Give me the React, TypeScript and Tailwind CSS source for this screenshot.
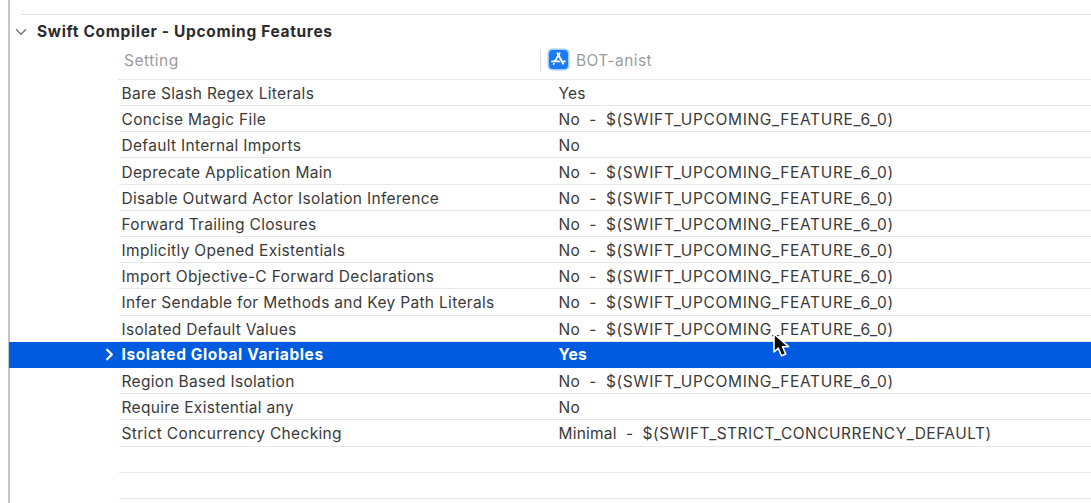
import { ChevronDown, ChevronRight } from "lucide-react";

type Setting = {
  name: string;
  value: string;
  macro?: string;
};

const UPCOMING = "$(SWIFT_UPCOMING_FEATURE_6_0)";
const STRICT = "$(SWIFT_STRICT_CONCURRENCY_DEFAULT)";

const settings: Setting[] = [
  { name: "Bare Slash Regex Literals", value: "Yes" },
  { name: "Concise Magic File", value: "No", macro: UPCOMING },
  { name: "Default Internal Imports", value: "No" },
  { name: "Deprecate Application Main", value: "No", macro: UPCOMING },
  { name: "Disable Outward Actor Isolation Inference", value: "No", macro: UPCOMING },
  { name: "Forward Trailing Closures", value: "No", macro: UPCOMING },
  { name: "Implicitly Opened Existentials", value: "No", macro: UPCOMING },
  { name: "Import Objective-C Forward Declarations", value: "No", macro: UPCOMING },
  { name: "Infer Sendable for Methods and Key Path Literals", value: "No", macro: UPCOMING },
  { name: "Isolated Default Values", value: "No", macro: UPCOMING },
  { name: "Isolated Global Variables", value: "Yes" },
  { name: "Region Based Isolation", value: "No", macro: UPCOMING },
  { name: "Require Existential any", value: "No" },
  { name: "Strict Concurrency Checking", value: "Minimal", macro: STRICT },
];

const selected = "Isolated Global Variables";

function AppIcon() {
  return (
    <svg className="h-[23px] w-[23px] shrink-0" viewBox="0 0 23 23" fill="none">
      <rect x="0.5" y="0.5" width="22" height="22" rx="5" fill="#a3cbfb" />
      <rect x="2" y="2" width="19" height="19" rx="4" fill="#1c7bf3" />
      <g stroke="#fff" strokeWidth="1.8" strokeLinecap="round">
        <path d="M10.4 5.2l5.8 10.6" />
        <path d="M12.6 5.2L8 13.2" />
        <path d="M5 13.4h7.4M15.4 13.4h2.6" />
        <path d="M6.9 15.6l-.3.5" />
      </g>
    </svg>
  );
}

function SettingRow({ name, value, macro }: Setting) {
  if (name === selected) {
    return (
      <div className="flex h-[26.2px] items-center bg-[#005be0] font-bold text-white">
        <div className="flex w-[112.5px] justify-end pr-[3px]">
          <ChevronRight className="h-[19px] w-[19px]" strokeWidth={2.8} />
        </div>
        <div className="w-[437px] pt-px tracking-[0.6px]">{name}</div>
        <div className="pt-px tracking-[0.3px]">{value}</div>
      </div>
    );
  }

  return (
    <div className="ml-[110px] flex h-[26.2px] items-center border-b border-[#e6e6e6] pt-[3px] pl-[2.5px]">
      <div className="w-[437px] tracking-[0.32px]">{name}</div>
      <div className="flex">
        <span className="tracking-[0.2px]">{value}</span>
        {macro && (
          <>
            <span className="w-[26px] text-center">-</span>
            <span className={macro === STRICT ? "tracking-[0.47px]" : "tracking-[0.65px]"}>{macro}</span>
          </>
        )}
      </div>
    </div>
  );
}

export default function App() {
  return (
    <div className="relative h-[503px] w-[1091px] overflow-hidden bg-white pl-2 font-['Inter',sans-serif] text-[15.5px] leading-5 whitespace-nowrap text-[#3a3a3a]">
      <div className="h-full border-l-2 border-[#c6c6c6]">
        <div className="ml-[11px] h-[15px] border-b border-[#e2e2e2]" />

        {/* Section title */}
        <div className="flex h-[33px] items-center pl-[2px]">
          <ChevronDown className="h-[18px] w-[18px] text-[#808080]" strokeWidth={2.3} />
          <h2 className="ml-[7px] pt-px font-bold tracking-[0.66px] text-[#2c2c2c]">Swift Compiler - Upcoming Features</h2>
        </div>

        {/* Column headings */}
        <div className="ml-[108px] flex h-[31.9px] items-center border-b border-[#e6e6e6] pl-[6px] text-[#9c9c9c]">
          <div className="w-[416px] pb-[4px] tracking-[0.5px]">Setting</div>
          <div className="mb-[5px] h-[21px] border-l border-[#dddddd]" />
          <div className="flex items-center gap-[6px] pb-[8px] pl-[6px]">
            <AppIcon />
            <span className="pt-[4px] tracking-[0.4px]">BOT-anist</span>
          </div>
        </div>

        <div className="-ml-px">
          {settings.map((setting) => (
            <SettingRow key={setting.name} {...setting} />
          ))}

          {/* Unused rows */}
          <div className="ml-[110px] h-[26.2px] border-b border-[#e6e6e6]" />
          <div className="ml-[110px] h-[26.2px] border-b border-[#e6e6e6]" />
        </div>
      </div>

      {/* Mouse pointer */}
      <svg className="absolute top-[332px] left-[772px] h-[27px] w-[19px]" viewBox="0 0 19 27">
        <path
          d="M2 2v18l4.3-3.8 3.2 7.6 4.2-1.8-3.2-7.3h6.1z"
          fill="#0a0a0a"
          stroke="#fff"
          strokeWidth="1.6"
          strokeLinejoin="round"
        />
      </svg>
    </div>
  );
}
